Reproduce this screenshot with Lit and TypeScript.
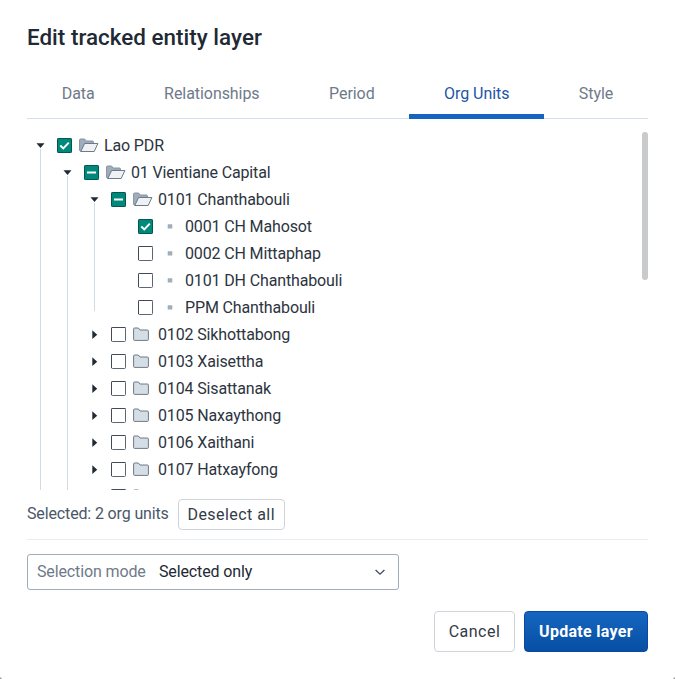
import { LitElement, html, css, svg, nothing } from "lit";
import { customElement, property } from "lit/decorators.js";

type Check = "on" | "some" | "off";

interface OrgUnit {
  name: string;
  check: Check;
  kind: "open" | "closed" | "leaf";
  children?: OrgUnit[];
}

const leaf = (name: string, check: Check = "off"): OrgUnit => ({ name, check, kind: "leaf" });
const closed = (name: string): OrgUnit => ({ name, check: "off", kind: "closed" });

const tree: OrgUnit = {
  name: "Lao PDR",
  check: "on",
  kind: "open",
  children: [
    {
      name: "01 Vientiane Capital",
      check: "some",
      kind: "open",
      children: [
        {
          name: "0101 Chanthabouli",
          check: "some",
          kind: "open",
          children: [
            leaf("0001 CH Mahosot", "on"),
            leaf("0002 CH Mittaphap"),
            leaf("0101 DH Chanthabouli"),
            leaf("PPM Chanthabouli"),
          ],
        },
        closed("0102 Sikhottabong"),
        closed("0103 Xaisettha"),
        closed("0104 Sisattanak"),
        closed("0105 Naxaythong"),
        closed("0106 Xaithani"),
        closed("0107 Hatxayfong"),
        closed(""),
      ],
    },
  ],
};

@customElement("org-unit-node")
export class OrgUnitNode extends LitElement {
  @property({ attribute: false }) unit!: OrgUnit;

  static styles = css`
    :host {
      display: grid;
      grid-template-columns: 27px 1fr;
    }
    svg {
      display: block;
    }
    .gutter {
      display: flex;
      flex-direction: column;
      align-items: center;
    }
    .arrow {
      height: 17px;
      flex: none;
    }
    .guide {
      flex: 1;
      width: 1px;
      margin-bottom: 10px;
      background: #d1dbe4;
    }
    .row {
      display: flex;
      align-items: center;
      height: 27px;
      white-space: nowrap;
    }
    .check {
      box-sizing: border-box;
      width: 16px;
      height: 15px;
      margin: 0 6px 0 3px;
      flex: none;
    }
    .icon {
      width: 20px;
      margin: 0 5px 0 0;
      flex: none;
    }
    .name {
      color: #2c3440;
      letter-spacing: -0.14px;
    }
  `;

  private checkbox(check: Check) {
    const full = check !== "off";
    return svg`<svg class="check" width="16" height="15" viewBox="0 0 16 15">
      ${full
        ? svg`<rect x="0.5" y="0.5" width="14" height="14" rx=".6" fill="#00897b" stroke="#00594f"/>`
        : svg`<rect x="0.5" y="0.5" width="14" height="14" rx="1" fill="#fff" stroke="#5c6673"/>
          <path d="M0.5 14V1.2Q0.5 .5 1.2 .5H14.5" fill="none" stroke="#404b5a"/>`}
      ${check === "on" ? svg`<path d="M3.3 7.6 6.3 10.4 11.8 4.6" fill="none" stroke="#fff" stroke-width="2"/>` : nothing}
      ${check === "some" ? svg`<rect x="3" y="6.5" width="9" height="2" fill="#fff"/>` : nothing}
    </svg>`;
  }

  private icon(kind: OrgUnit["kind"]) {
    if (kind === "open") {
      return svg`<svg class="icon" width="20" height="15" viewBox="0 0 20 15">
        <path d="M.6 12.5V2Q.6 1 1.6 1H5.6L7.2 3H13.4Q14.4 3 14.4 4V5.4H5.6L2 13.4Z" fill="#a0adba" stroke="#8592a2"/>
        <path d="M5.6 5.5H18.9L15.2 13.5H1.8Z" fill="#eff2f5" stroke="#6e7a8a" stroke-linejoin="round"/>
      </svg>`;
    }
    if (kind === "closed") {
      return svg`<svg class="icon" width="20" height="15" viewBox="0 0 20 15">
        <path d="M.6 12.5V2Q.6 1 1.6 1H5.4L7 3H14.4Q15.4 3 15.4 4V12.4Q15.4 13.4 14.4 13.4H1.6Q.6 13.4 .6 12.5Z" fill="#d5dde5" stroke="#6e7a8a"/>
      </svg>`;
    }
    return svg`<svg class="icon" width="20" height="15" viewBox="0 0 20 15">
      <rect x="7.7" y="5.2" width="4.6" height="4.4" rx=".4" fill="#a0adba"/>
    </svg>`;
  }

  render() {
    const { name, check, kind, children } = this.unit;
    return html`
      <div class="gutter">
        ${kind === "open"
          ? svg`<svg class="arrow" width="9" height="17" viewBox="0 0 9 17"><path d="M.5 11.2H8.5L4.5 16Z" fill="#212934"/></svg>`
          : kind === "closed"
            ? svg`<svg width="9" height="27" viewBox="0 0 9 27"><path d="M2.3 9.3V18.1L7.2 13.7Z" fill="#212934"/></svg>`
            : nothing}
        ${children ? html`<div class="guide"></div>` : nothing}
      </div>
      <div>
        <div class="row">${this.checkbox(check)}${this.icon(kind)}<span class="name">${name}</span></div>
        ${children?.map((c) => html`<org-unit-node .unit=${c}></org-unit-node>`)}
      </div>
    `;
  }
}

@customElement("app-root")
export class AppRoot extends LitElement {
  static styles = css`
    :host {
      display: flex;
      flex-direction: column;
      box-sizing: border-box;
      height: 679px;
      padding: 24px 27px 27px;
      background:
        linear-gradient(45deg, #9a9a9a 1px, transparent 2px),
        linear-gradient(-45deg, #9a9a9a 1px, transparent 2px),
        #fff;
      overflow: hidden;
      font: 16px/19px Roboto, "Noto Sans", sans-serif;
      color: #212934;
    }
    .title {
      margin: 0;
      font-size: 22.4px;
      line-height: 26px;
      font-weight: 500;
      letter-spacing: 0.03px;
    }
    .tabs {
      display: flex;
      height: 48px;
      margin-top: 20px;
      border-bottom: 1px solid #d5e0ea;
    }
    .tab {
      flex: 1 1 auto;
      box-sizing: border-box;
      height: 48px;
      padding-top: 14px;
      text-align: center;
      color: #6e7a8a;
      letter-spacing: -0.06px;
    }
    .tab.active {
      height: 49px;
      color: #1d55a8;
      border-bottom: 5px solid #1565c0;
    }
    .tree {
      display: flex;
      align-items: flex-start;
      height: 358px;
      margin-top: 13px;
      overflow: hidden;
    }
    .nodes {
      flex: 1;
    }
    .thumb {
      width: 6px;
      height: 148px;
      border-radius: 3px;
      background: #c9cacc;
    }
    .summary {
      display: flex;
      align-items: center;
      gap: 9px;
      height: 49px;
      border-bottom: 1px solid #e8edf2;
      color: #4a5768;
    }
    .count {
      padding-bottom: 2px;
      letter-spacing: -0.14px;
    }
    .btn {
      box-sizing: border-box;
      border: 1px solid #d0d3d8;
      border-radius: 4px;
      background: #fff;
      color: #333b47;
      font: inherit;
      letter-spacing: 0.5px;
      padding: 0;
    }
    .deselect {
      width: 107px;
      height: 31px;
      letter-spacing: 0.45px;
    }
    .select {
      display: flex;
      align-items: center;
      box-sizing: border-box;
      width: 372px;
      height: 36px;
      margin-top: 14px;
      padding: 0 12px 0 9px;
      border: 1px solid #a0adba;
      border-radius: 3px;
      letter-spacing: -0.13px;
    }
    .prefix {
      width: 122px;
      padding-bottom: 2px;
      color: #6e7a8a;
    }
    .value {
      flex: 1;
      padding-bottom: 2px;
    }
    .actions {
      display: flex;
      justify-content: flex-end;
      gap: 9px;
      margin-top: 21px;
    }
    .action {
      height: 41px;
    }
    .cancel {
      width: 81px;
    }
    .primary {
      width: 124px;
      border-color: #0d47a1;
      background: linear-gradient(#1565c0, #0650a3);
      color: #fff;
      font-weight: 700;
      letter-spacing: 0.3px;
    }
  `;

  render() {
    const tabs = ["Data", "Relationships", "Period", "Org Units", "Style"];
    return html`
      <h1 class="title">Edit tracked entity layer</h1>
      <nav class="tabs">
        ${tabs.map((t) => html`<div class="tab ${t === "Org Units" ? "active" : ""}">${t}</div>`)}
      </nav>
      <div class="tree">
        <org-unit-node class="nodes" .unit=${tree}></org-unit-node>
        <div class="thumb"></div>
      </div>
      <div class="summary">
        <span class="count">Selected: 2 org units</span>
        <button class="btn deselect">Deselect all</button>
      </div>
      <div class="select">
        <span class="prefix">Selection mode</span>
        <span class="value">Selected only</span>
        <svg width="12" height="8" viewBox="0 0 12 8">
          <path d="M1.6 2 6 6.2 10.4 2" fill="none" stroke="#404b5a" stroke-width="1.3" />
        </svg>
      </div>
      <div class="actions">
        <button class="btn action cancel">Cancel</button>
        <button class="btn action primary">Update layer</button>
      </div>
    `;
  }
}
